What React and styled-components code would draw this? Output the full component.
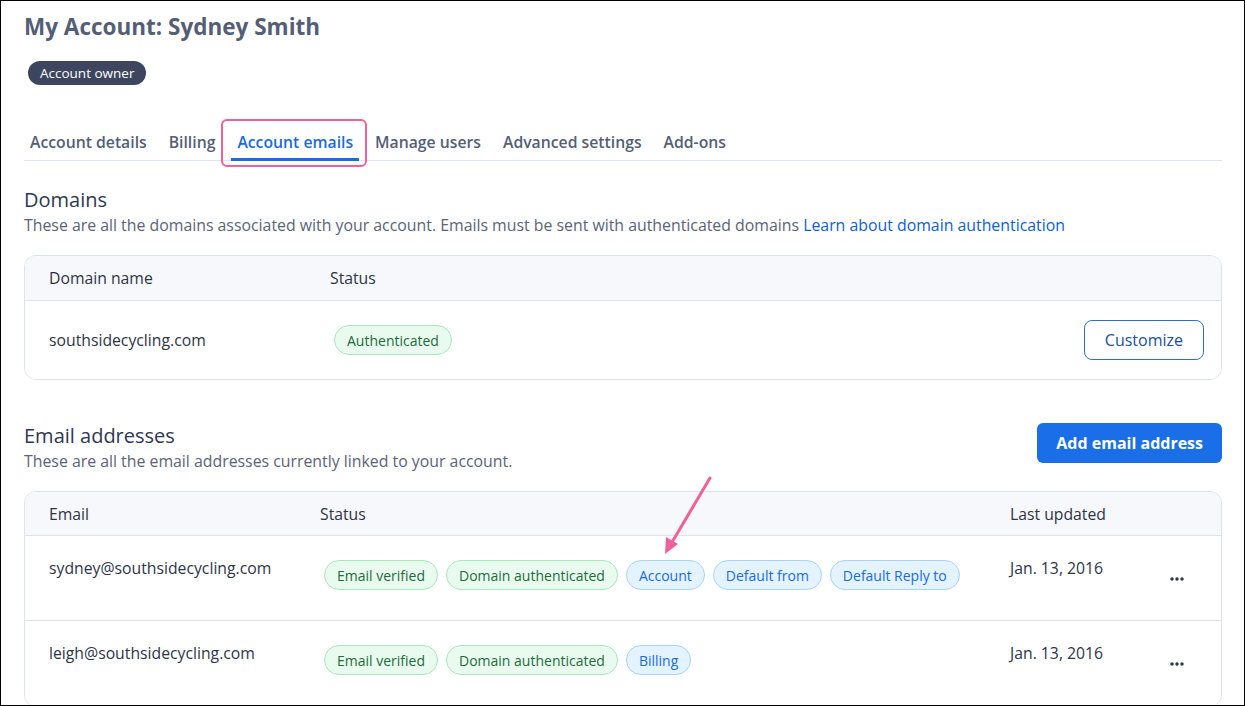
import React from 'react';
import styled, { createGlobalStyle } from 'styled-components';

const GlobalStyle = createGlobalStyle`
  html, body {
    margin: 0;
    padding: 0;
    background: #ffffff;
  }
  * {
    box-sizing: border-box;
  }
  body {
    font-family: "Open Sans", "Noto Sans", "Liberation Sans", sans-serif;
    color: #2d3447;
  }
`;

export const Page = styled.div`
  position: relative;
  width: 1245px;
  height: 706px;
  border: 1px solid #000000;
  padding: 12px 22px 0 23px;
  overflow: hidden;
`;

export const Title = styled.h1`
  margin: 0;
  font-size: 22.5px;
  line-height: 28px;
  font-weight: 700;
  color: #545e75;
`;

export const OwnerBadge = styled.span`
  display: inline-flex;
  align-items: center;
  height: 24px;
  margin: 20px 0 0 4px;
  padding: 0 12px;
  border-radius: 12px;
  background: #3d465e;
  color: #ffffff;
  font-size: 13.5px;
  font-weight: 500;
`;

export const Tabs = styled.nav`
  display: flex;
  gap: 10px;
  margin-top: 39px;
  border-bottom: 1px solid #dfe4ee;
`;

export const Tab = styled.div`
  position: relative;
  display: flex;
  align-items: center;
  height: 37px;
  padding: 1px 6px 0;
  font-size: 15.75px;
  font-weight: 600;
  color: ${(p) => (p.$active ? '#1a6be0' : '#545e75')};
  border-bottom: 3px solid ${(p) => (p.$active ? '#1a6be0' : 'transparent')};
  margin-bottom: -1px;
`;

export const Highlight = styled.span`
  position: absolute;
  top: -5px;
  left: -10px;
  right: -8px;
  bottom: -9px;
  border: 2px solid #f0609a;
  border-radius: 6px;
  pointer-events: none;
`;

export const SectionHead = styled.div`
  display: flex;
  justify-content: space-between;
  align-items: flex-start;
  margin-top: ${(p) => p.$top}px;
`;

export const Heading = styled.h2`
  margin: 0;
  font-size: 20px;
  line-height: 24px;
  font-weight: 500;
  color: #2e3850;
`;

export const Description = styled.p`
  margin: 3px 0 0;
  font-size: 15.85px;
  line-height: 20px;
  color: #5a6478;
`;

export const Link = styled.a`
  color: #0b5fd6;
  text-decoration: none;
`;

export const Card = styled.div`
  margin-top: 20px;
  border: 1px solid #dde3ec;
  border-radius: 12px;
  overflow: hidden;
`;

export const Row = styled.div`
  display: grid;
  grid-template-columns: ${(p) => p.$cols};
  align-items: ${(p) => p.$align || 'center'};
  height: ${(p) => p.$h}px;
  padding: ${(p) => p.$pad || '0'};
  padding-left: 24px;
  background: ${(p) => (p.$head ? '#f7f8fb' : '#ffffff')};
  border-bottom: ${(p) => (p.$last ? 'none' : '1px solid #dde3ec')};
  font-size: 15.75px;
  color: #2d3447;
`;

export const Cell = styled.div`
  line-height: 20px;
  white-space: nowrap;
`;

export const Pills = styled.div`
  display: flex;
  gap: 8px;
  margin: 2px 0 0 4px;
`;

export const Pill = styled.span`
  display: inline-flex;
  align-items: center;
  height: 30px;
  padding: 0 12px;
  margin-left: ${(p) => (p.$inset ? '4px' : '0')};
  border-radius: 15px;
  font-size: 14px;
  white-space: nowrap;
  background: ${(p) => (p.$tone === 'blue' ? '#e3f3ff' : '#e9fbef')};
  border: 1px solid ${(p) => (p.$tone === 'blue' ? '#a9d3f5' : '#a8e6bf')};
  color: ${(p) => (p.$tone === 'blue' ? '#1a6be0' : '#1d6b3b')};
`;

export const OutlineButton = styled.button`
  justify-self: end;
  height: 40px;
  padding: 0 20px;
  border: 1px solid #2b6fd6;
  border-radius: 8px;
  background: #ffffff;
  color: #1a4fa0;
  font-family: inherit;
  font-size: 16px;
  font-weight: 500;
`;

export const PrimaryButton = styled.button`
  height: 40px;
  padding: 0 19px;
  border: none;
  border-radius: 6px;
  background: #1a6fe8;
  color: #ffffff;
  font-family: inherit;
  font-size: 16px;
  font-weight: 700;
  margin-top: -1px;
`;

export const Dots = styled.div`
  display: flex;
  padding: 18px 0 0 12px;
`;

const MoreIcon = () => (
  <svg width="16" height="6" viewBox="0 0 16 6">
    <circle cx="3" cy="3" r="1.7" fill="#2d3447" />
    <circle cx="8" cy="3" r="1.7" fill="#2d3447" />
    <circle cx="13" cy="3" r="1.7" fill="#2d3447" />
  </svg>
);

export const Arrow = styled.svg`
  position: absolute;
  left: 655px;
  top: 470px;
  pointer-events: none;
`;

const emails = [
  {
    email: 'sydney@southsidecycling.com',
    green: ['Email verified', 'Domain authenticated'],
    blue: ['Account', 'Default from', 'Default Reply to'],
    date: 'Jan. 13, 2016',
  },
  {
    email: 'leigh@southsidecycling.com',
    green: ['Email verified', 'Domain authenticated'],
    blue: ['Billing'],
    date: 'Jan. 13, 2016',
  },
];

const tabs = ['Account details', 'Billing', 'Account emails', 'Manage users', 'Advanced settings', 'Add-ons'];

const domainCols = '281px 1fr auto';
const emailCols = '271px 690px 1fr 64px';

const App = () => {
  return (
    <>
      <GlobalStyle />
      <Page>
        <Title>My Account: Sydney Smith</Title>
        <OwnerBadge>Account owner</OwnerBadge>

        <Tabs>
          {tabs.map((t) => (
            <Tab key={t} $active={t === 'Account emails'}>
              {t}
              {t === 'Account emails' && <Highlight />}
            </Tab>
          ))}
        </Tabs>

        <SectionHead $top={27}>
          <div>
            <Heading>Domains</Heading>
            <Description>
              These are all the domains associated with your account. Emails must be sent with authenticated domains{' '}
              <Link href="#">Learn about domain authentication</Link>
            </Description>
          </div>
        </SectionHead>

        <Card>
          <Row $head $cols={domainCols} $h={45}>
            <Cell>Domain name</Cell>
            <Cell>Status</Cell>
            <Cell />
          </Row>
          <Row $last $cols={domainCols} $h={78} $pad="0 17px 0 0">
            <Cell>southsidecycling.com</Cell>
            <div>
              <Pill $inset>Authenticated</Pill>
            </div>
            <OutlineButton>Customize</OutlineButton>
          </Row>
        </Card>

        <SectionHead $top={44}>
          <div>
            <Heading>Email addresses</Heading>
            <Description>These are all the email addresses currently linked to your account.</Description>
          </div>
          <PrimaryButton>Add email address</PrimaryButton>
        </SectionHead>

        <Card>
          <Row $head $cols={emailCols} $h={44}>
            <Cell>Email</Cell>
            <Cell>Status</Cell>
            <Cell>Last updated</Cell>
            <Cell />
          </Row>
          {emails.map((e, i) => (
            <Row key={e.email} $cols={emailCols} $h={85} $align="start" $pad="22px 0 0" $last={i === emails.length - 1}>
              <Cell>{e.email}</Cell>
              <Pills>
                {e.green.map((g) => (
                  <Pill key={g}>{g}</Pill>
                ))}
                {e.blue.map((b) => (
                  <Pill key={b} $tone="blue">{b}</Pill>
                ))}
              </Pills>
              <Cell>{e.date}</Cell>
              <Dots>
                <MoreIcon />
              </Dots>
            </Row>
          ))}
        </Card>

        <Arrow width="60" height="90" viewBox="0 0 60 90">
          <line x1="54" y1="7" x2="15" y2="73" stroke="#f0609a" strokeWidth="3" strokeLinecap="round" />
          <polygon points="9,83 10,66 22,73" fill="#f0609a" />
        </Arrow>
      </Page>
    </>
  );
};

export default App;
